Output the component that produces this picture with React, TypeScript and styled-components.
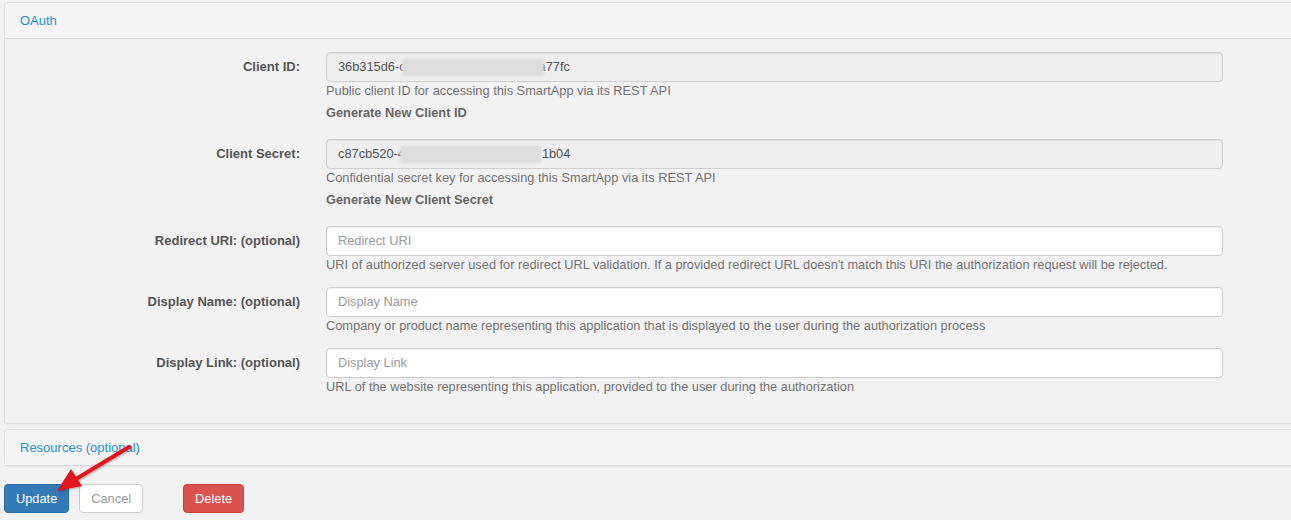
import React from "react";
import styled, { createGlobalStyle } from "styled-components";

const Global = createGlobalStyle`
  html, body { margin: 0; padding: 0; background: #f2f2f2; overflow: hidden; }
  body { font-family: "Liberation Sans", Arial, Helvetica, sans-serif; font-size: 13px; color: #555; }
  * { box-sizing: border-box; }
`;

const Page = styled.div`
  position: relative;
  padding: 2px 0 0 4px;
  width: 1310px;
  height: 520px;
`;

const Panel = styled.section<{ $gap?: number }>`
  width: 1300px;
  border: 1px solid #dcdcdc;
  border-radius: 4px;
  background: #f2f2f2;
  margin-bottom: ${(p) => p.$gap ?? 6}px;
  box-shadow: 0 1px 1px rgba(0, 0, 0, 0.04);
`;

const PanelHeading = styled.div<{ $bordered?: boolean }>`
  background: #f4f4f4;
  padding: 9px 15px 9px;
  line-height: 17px;
  border-bottom: ${(p) => (p.$bordered ? "1px solid #dcdcdc" : "none")};
  border-radius: 3px 3px 0 0;
`;

const HeadingLink = styled.a`
  color: #2591c8;
  text-decoration: none;
  font-size: 13px;
`;

const PanelBody = styled.div`
  padding: 13px 0 28px 0;
  display: flex;
  flex-direction: column;
  gap: 14px;
`;

const Row = styled.div`
  display: grid;
  grid-template-columns: 295px 897px;
  column-gap: 26px;
  align-items: start;
`;

const Label = styled.label`
  text-align: right;
  font-weight: bold;
  color: #555;
  padding-top: 6px;
  line-height: 17px;
`;

const Field = styled.div`
  display: flex;
  flex-direction: column;
  font-size: 12.8px;
`;

const Control = styled.div<{ $readonly?: boolean; $placeholder?: boolean }>`
  height: 30px;
  border: 1px solid ${(p) => (p.$readonly ? "#cfcfcf" : "#cccccc")};
  border-radius: 4px;
  background: ${(p) => (p.$readonly ? "#eeeeee" : "#ffffff")};
  padding: 6px 11px;
  line-height: 16px;
  color: ${(p) => (p.$placeholder ? "#999" : "#555")};
  box-shadow: inset 0 1px 1px rgba(0, 0, 0, 0.06);
  white-space: nowrap;
  overflow: hidden;
  display: flex;
  align-items: center;
`;

const Redact = styled.span<{ $w: number; $ml: number; $mr: number }>`
  display: inline-block;
  width: ${(p) => p.$w}px;
  height: 17px;
  margin-left: ${(p) => p.$ml}px;
  margin-right: ${(p) => p.$mr}px;
  background: #dddddd;
  filter: blur(1px);
  position: relative;
  z-index: 1;
`;

const Help = styled.div`
  color: #737373;
  line-height: 17px;
  white-space: nowrap;
`;

const GenLink = styled.div`
  color: #666;
  font-weight: bold;
  line-height: 17px;
  margin-top: 5px;
  margin-bottom: 4px;
`;

const Actions = styled.div`
  display: flex;
  align-items: center;
  margin-top: 18px;
`;

const Btn = styled.button<{ $variant: "primary" | "default" | "danger"; $ml?: number }>`
  font-family: "Liberation Sans", Arial, sans-serif;
  font-size: 12.8px;
  line-height: 17px;
  height: 29px;
  padding: 5px 11px;
  border-radius: 4px;
  margin-left: ${(p) => p.$ml ?? 0}px;
  border: 1px solid
    ${(p) => (p.$variant === "primary" ? "#2e6da4" : p.$variant === "danger" ? "#d43f3a" : "#cccccc")};
  background: ${(p) => (p.$variant === "primary" ? "#337ab7" : p.$variant === "danger" ? "#d9534f" : "#ffffff")};
  color: ${(p) => (p.$variant === "default" ? "#999" : "#fff")};
  cursor: pointer;
`;

const ArrowSvg = styled.svg`
  position: absolute;
  left: 0;
  top: 0;
  pointer-events: none;
`;

const Arrow = () => (
  <ArrowSvg width="200" height="520" viewBox="0 0 200 520">
    <defs>
      <filter id="sh" x="-20%" y="-20%" width="140%" height="140%">
        <feDropShadow dx="1" dy="1" stdDeviation="1" floodColor="#000" floodOpacity="0.3" />
      </filter>
    </defs>
    <g filter="url(#sh)">
      <line x1="129" y1="447" x2="76" y2="479" stroke="#e3141b" strokeWidth="3.8" strokeLinecap="round" />
      <polygon points="57,491 71,469 82,486" fill="#e3141b" />
    </g>
  </ArrowSvg>
);

type RowDef = {
  label: string;
  help: string;
  gen?: string;
  placeholder?: string;
  value?: React.ReactNode;
};

const rows: RowDef[] = [
  {
    label: "Client ID:",
    value: (
      <>
        <span>36b315d6-c</span>
        <Redact $w={142} $ml={-4} $mr={-5} />
        <span>a77fc</span>
      </>
    ),
    help: "Public client ID for accessing this SmartApp via its REST API",
    gen: "Generate New Client ID",
  },
  {
    label: "Client Secret:",
    value: (
      <>
        <span>c87cb520-4</span>
        <Redact $w={141} $ml={-5} $mr={1} />
        <span>1b04</span>
      </>
    ),
    help: "Confidential secret key for accessing this SmartApp via its REST API",
    gen: "Generate New Client Secret",
  },
  {
    label: "Redirect URI: (optional)",
    placeholder: "Redirect URI",
    help: "URI of authorized server used for redirect URL validation. If a provided redirect URL doesn't match this URI the authorization request will be rejected.",
  },
  {
    label: "Display Name: (optional)",
    placeholder: "Display Name",
    help: "Company or product name representing this application that is displayed to the user during the authorization process",
  },
  {
    label: "Display Link: (optional)",
    placeholder: "Display Link",
    help: "URL of the website representing this application, provided to the user during the authorization",
  },
];

export default function App() {
  return (
    <>
      <Global />
      <Page>
        <Panel $gap={5}>
          <PanelHeading $bordered>
            <HeadingLink href="#">OAuth</HeadingLink>
          </PanelHeading>
          <PanelBody>
            {rows.map((r) => (
              <Row key={r.label}>
                <Label>{r.label}</Label>
                <Field>
                  {r.value ? (
                    <Control $readonly>{r.value}</Control>
                  ) : (
                    <Control $placeholder>{r.placeholder}</Control>
                  )}
                  <Help>{r.help}</Help>
                  {r.gen && <GenLink>{r.gen}</GenLink>}
                </Field>
              </Row>
            ))}
          </PanelBody>
        </Panel>
        <Panel $gap={0}>
          <PanelHeading>
            <HeadingLink href="#">Resources (optional)</HeadingLink>
          </PanelHeading>
        </Panel>
        <Actions>
          <Btn $variant="primary">Update</Btn>
          <Btn $variant="default" $ml={10}>Cancel</Btn>
          <Btn $variant="danger" $ml={40}>Delete</Btn>
        </Actions>
        <Arrow />
      </Page>
    </>
  );
}
